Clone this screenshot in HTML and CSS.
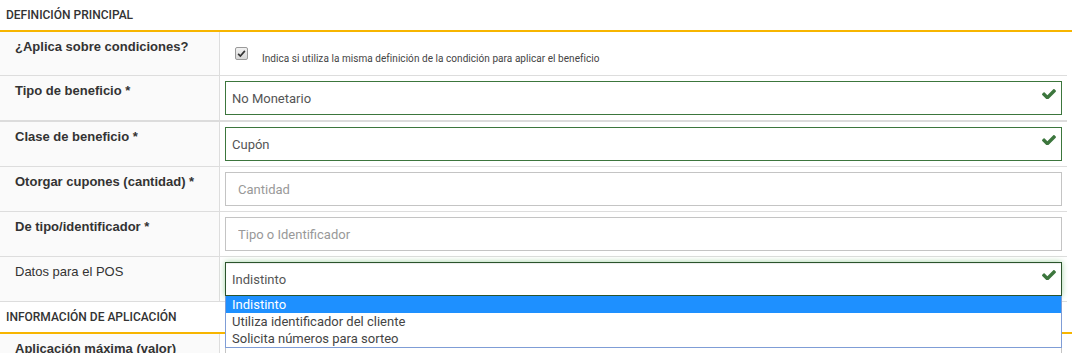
FILE: index.html
```html
<!DOCTYPE html>
<html lang="es">
<head>
    <meta charset="UTF-8">
    <meta name="viewport" content="width=device-width, initial-scale=1.0">
    <title>Definición del beneficio</title>
    <link rel="stylesheet" href="styles.css">
</head>
<body>

<!-- Definicion principal -->
<div class="section-title">Definición principal</div>

<div class="form-table">
    <div class="form-row">
        <div class="form-label">¿Aplica sobre condiciones?</div>
        <div class="form-field check-field">
            <span class="fake-check">
                <svg viewBox="0 0 12 12" width="9" height="9"><path d="M1.5 6.5 L4.5 9.5 L10.5 2.5" fill="none" stroke="#333" stroke-width="2.2"/></svg>
            </span>
            <span class="hint">Indica si utiliza la misma definición de la condición para aplicar el beneficio</span>
        </div>
    </div>

    <div class="form-row row-thick">
        <div class="form-label">Tipo de beneficio *</div>
        <div class="form-field">
            <div class="control-wrap">
                <select class="control valid">
                    <option>No Monetario</option>
                </select>
                <svg class="ok-icon" viewBox="121 350 1550 1080" width="14" height="10"><path d="M1671 566q0 40-28 68l-724 724-136 136q-28 28-68 28t-68-28l-136-136-362-362q-28-28-28-68t28-68l136-136q28-28 68-28t68 28l294 295 656-657q28-28 68-28t68 28l136 136q28 28 28 68z"/></svg>
            </div>
        </div>
    </div>

    <div class="form-row">
        <div class="form-label">Clase de beneficio *</div>
        <div class="form-field">
            <div class="control-wrap">
                <select class="control valid">
                    <option>Cupón</option>
                </select>
                <svg class="ok-icon" viewBox="121 350 1550 1080" width="14" height="10"><path d="M1671 566q0 40-28 68l-724 724-136 136q-28 28-68 28t-68-28l-136-136-362-362q-28-28-28-68t28-68l136-136q28-28 68-28t68 28l294 295 656-657q28-28 68-28t68 28l136 136q28 28 28 68z"/></svg>
            </div>
        </div>
    </div>

    <div class="form-row">
        <div class="form-label">Otorgar cupones (cantidad) *</div>
        <div class="form-field">
            <input type="text" class="control text" placeholder="Cantidad">
        </div>
    </div>

    <div class="form-row">
        <div class="form-label">De tipo/identificador *</div>
        <div class="form-field">
            <input type="text" class="control text" placeholder="Tipo o Identificador">
        </div>
    </div>

    <div class="form-row">
        <div class="form-label normal">Datos para el POS</div>
        <div class="form-field">
            <div class="control-wrap">
                <select class="control valid focused">
                    <option>Indistinto</option>
                </select>
                <svg class="ok-icon" viewBox="121 350 1550 1080" width="14" height="10"><path d="M1671 566q0 40-28 68l-724 724-136 136q-28 28-68 28t-68-28l-136-136-362-362q-28-28-28-68t28-68l136-136q28-28 68-28t68 28l294 295 656-657q28-28 68-28t68 28l136 136q28 28 28 68z"/></svg>
                <ul class="dropdown">
                    <li class="selected">Indistinto</li>
                    <li>Utiliza identificador del cliente</li>
                    <li>Solicita números para sorteo</li>
                </ul>
            </div>
        </div>
    </div>
</div>

<!-- Informacion de aplicacion -->
<div class="section-title">Información de aplicación</div>

<div class="form-table">
    <div class="form-row">
        <div class="form-label">Aplicación máxima (valor)</div>
        <div class="form-field">
            <input type="text" class="control text">
        </div>
    </div>
</div>

</body>
</html>
```

FILE: styles.css
```css
/* General Styles */
body {
    font-family: Roboto, "Liberation Sans", Arial, sans-serif;
    background: #fff;
    color: #333;
    margin: 0;
    padding: 0;
}

.section-title {
    height: 30px;
    line-height: 30px;
    padding: 0 6px;
    font-size: 12px;
    font-weight: 500;
    text-transform: uppercase;
    color: #333;
    border-bottom: 2px solid #f7b500;
}

.form-table {
    margin-right: 5px;
}

.form-row {
    display: flex;
    border-bottom: 1px solid #ddd;
}

.form-row.row-thick {
    border-bottom: 2px solid #dcdcdc;
}

.form-label {
    width: 220px;
    box-sizing: border-box;
    flex-shrink: 0;
    padding: 6px 15px 0;
    line-height: 18px;
    background: #fafafa;
    border-right: 1px solid #ddd;
    font-family: "Liberation Sans", Arial, sans-serif;
    font-size: 13px;
    font-weight: bold;
    color: #333;
}

.form-label.normal {
    font-weight: normal;
}

.form-field {
    flex: 1;
    padding: 5px;
}

.check-field {
    height: 33px;
    display: flex;
    align-items: center;
    padding-left: 15px;
}

.fake-check {
    width: 11px;
    height: 11px;
    margin-top: -1px;
    border: 1px solid #9a9a9a;
    border-radius: 2px;
    background: linear-gradient(#f2f2f2, #d6d6d6);
    display: flex;
    align-items: center;
    justify-content: center;
}

.hint {
    margin-left: 14px;
    margin-top: 9px;
    font-size: 10px;
    letter-spacing: 0.05px;
    color: #444;
}

.control-wrap {
    position: relative;
}

.control {
    display: block;
    width: 100%;
    height: 34px;
    box-sizing: border-box;
    margin: 0;
    border: 1px solid #c4c4c4;
    border-radius: 0;
    background: #fff;
    font-family: Roboto, "Liberation Sans", Arial, sans-serif;
    font-size: 13px;
    color: #555;
    outline: none;
    -webkit-appearance: none;
    appearance: none;
}

select.control {
    padding: 0 6px;
}

.control.text {
    padding: 0 12px;
}

.control.text::placeholder {
    color: #999;
}

.control.valid {
    border-color: #3c763d;
}

.control.focused {
    border-color: #2b542c;
    box-shadow: inset 0 1px 1px rgba(0, 0, 0, 0.075), 0 0 6px #a3d3a4;
}

.ok-icon {
    position: absolute;
    right: 6px;
    top: 8px;
    fill: #3c763d;
}

.dropdown {
    position: absolute;
    top: 34px;
    left: 0;
    right: 0;
    margin: 0;
    padding: 0;
    list-style: none;
    background: #fff;
    border: 1px solid #7f9dd6;
    border-top: none;
    z-index: 5;
}

.dropdown li {
    height: 17px;
    line-height: 17px;
    padding: 0 6px;
    font-size: 13px;
    color: #444;
}

.dropdown li.selected {
    background: #1e90ff;
    color: #fff;
}
```
